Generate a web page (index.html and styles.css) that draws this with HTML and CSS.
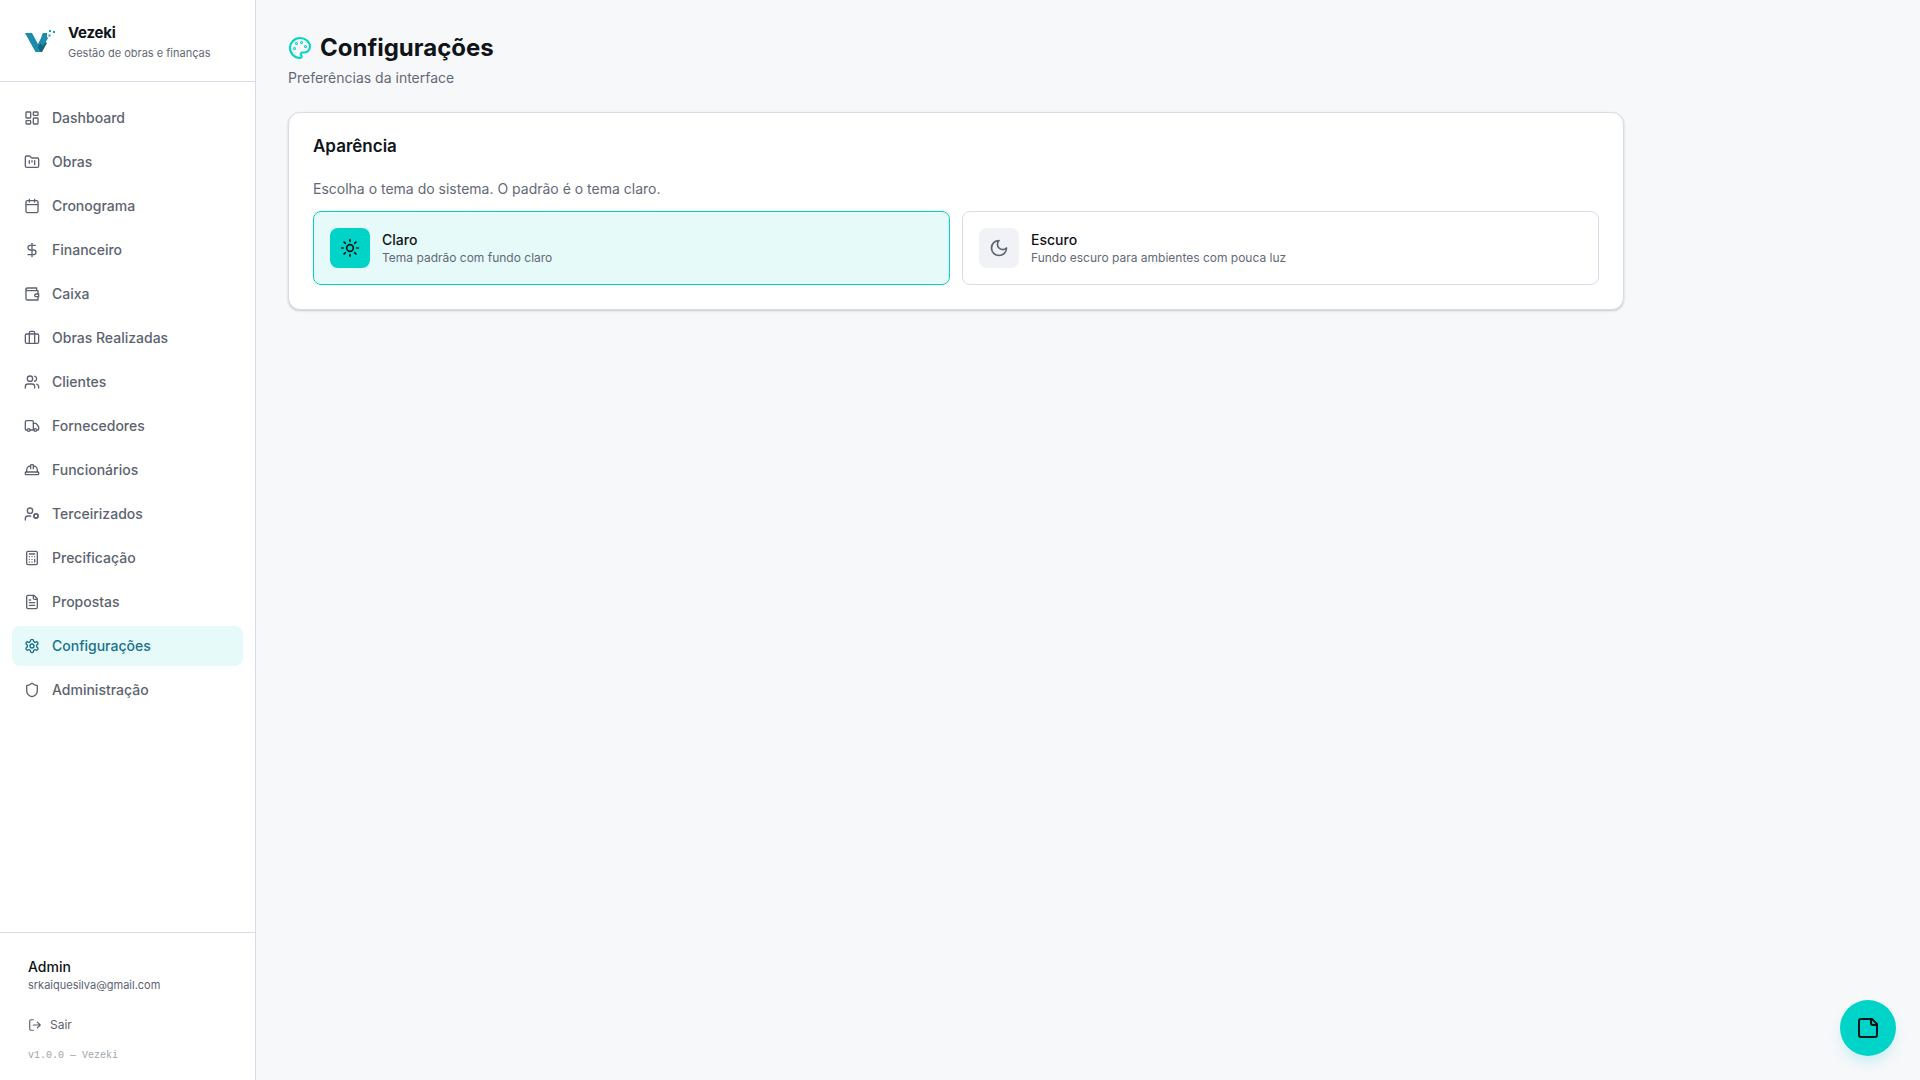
FILE: index.html
```html
<!DOCTYPE html>
<html lang="pt-BR">
<head>
  <meta charset="UTF-8" />
  <meta name="viewport" content="width=device-width, initial-scale=1.0"/>
  <title>Vezeki | Configurações</title>
  <link rel="stylesheet" href="styles.css">
</head>
<body>
  <aside class="sidebar">
    <div class="brand">
      <svg class="logo" viewBox="0 0 32 32">
        <path fill="#1b8cab" d="M1 8h7l6 11 5.500-11h3.500v3l-6.500 16h-5z"/>
        <path fill="#14647c" d="M18.500 15l4.500 3-5 9h-1.500l-2.500-5z"/>
        <path fill="#1b8cab" d="M18.500 8.500h4.500v4h1.500L19 21l-3-3z"/>
        <path fill="#1b9bb8" d="M25 5h2v2h-2zM29 6h2v2h-2zM24.500 9.500h2v2h-2z"/>
      </svg>
      <div>
        <h2>Vezeki</h2>
        <p>Gestão de obras e finanças</p>
      </div>
    </div>

    <nav class="menu">
      <a href="#"><svg class="icon" viewBox="0 0 24 24"><rect width="7" height="9" x="3" y="3" rx="1"/><rect width="7" height="5" x="14" y="3" rx="1"/><rect width="7" height="9" x="14" y="12" rx="1"/><rect width="7" height="5" x="3" y="16" rx="1"/></svg>Dashboard</a>
      <a href="#"><svg class="icon" viewBox="0 0 24 24"><path d="M4 20h16a2 2 0 0 0 2-2V8a2 2 0 0 0-2-2h-7.930a2 2 0 0 1-1.660-.9l-.82-1.200A2 2 0 0 0 7.930 3H4a2 2 0 0 0-2 2v13c0 1.100.9 2 2 2Z"/><path d="M8 10v4M12 10v2M16 10v6"/></svg>Obras</a>
      <a href="#"><svg class="icon" viewBox="0 0 24 24"><path d="M8 2v4M16 2v4"/><rect width="18" height="18" x="3" y="4" rx="2"/><path d="M3 10h18"/></svg>Cronograma</a>
      <a href="#"><svg class="icon" viewBox="0 0 24 24"><path d="M12 2v20"/><path d="M17 5H9.500a3.500 3.500 0 0 0 0 7h5a3.500 3.500 0 0 1 0 7H6"/></svg>Financeiro</a>
      <a href="#"><svg class="icon" viewBox="0 0 24 24"><path d="M21 12V7H5a2 2 0 0 1 0-4h14v4"/><path d="M3 5v14a2 2 0 0 0 2 2h16v-5"/><path d="M18 12a2 2 0 0 0 0 4h4v-4Z"/></svg>Caixa</a>
      <a href="#"><svg class="icon" viewBox="0 0 24 24"><path d="M16 20V4a2 2 0 0 0-2-2h-4a2 2 0 0 0-2 2v16"/><rect width="20" height="14" x="2" y="6" rx="2"/></svg>Obras Realizadas</a>
      <a href="#"><svg class="icon" viewBox="0 0 24 24"><path d="M16 21v-2a4 4 0 0 0-4-4H6a4 4 0 0 0-4 4v2"/><circle cx="9" cy="7" r="4"/><path d="M22 21v-2a4 4 0 0 0-3-3.870M16 3.130a4 4 0 0 1 0 7.750"/></svg>Clientes</a>
      <a href="#"><svg class="icon" viewBox="0 0 24 24"><path d="M14 18V6a2 2 0 0 0-2-2H4a2 2 0 0 0-2 2v11a1 1 0 0 0 1 1h2M15 18H9"/><path d="M19 18h2a1 1 0 0 0 1-1v-3.650a1 1 0 0 0-.22-.624l-3.480-4.350A1 1 0 0 0 17.520 8H14"/><circle cx="17" cy="18" r="2"/><circle cx="7" cy="18" r="2"/></svg>Fornecedores</a>
      <a href="#"><svg class="icon" viewBox="0 0 24 24"><path d="M2 18a1 1 0 0 0 1 1h18a1 1 0 0 0 1-1v-2a1 1 0 0 0-1-1H3a1 1 0 0 0-1 1v2z"/><path d="M10 10V5a1 1 0 0 1 1-1h2a1 1 0 0 1 1 1v5M4 15v-3a6 6 0 0 1 6-6M14 6a6 6 0 0 1 6 6v3"/></svg>Funcionários</a>
      <a href="#"><svg class="icon" viewBox="0 0 24 24"><circle cx="18" cy="15" r="3"/><circle cx="9" cy="7" r="4"/><path d="M10 15H6a4 4 0 0 0-4 4v2M21.700 16.400l-.9-.3M15.200 13.900l-.9-.3M16.600 18.700l.3-.9M19.100 12.200l.3-.9M19.600 18.700l-.4-1M16.800 12.300l-.4-1M14.300 16.600l1-.4M20.700 13.800l1-.4"/></svg>Terceirizados</a>
      <a href="#"><svg class="icon" viewBox="0 0 24 24"><rect width="16" height="20" x="4" y="2" rx="2"/><path d="M8 6h8M16 14v4M16 10h.01M12 10h.01M8 10h.01M12 14h.01M8 14h.01M12 18h.01M8 18h.01"/></svg>Precificação</a>
      <a href="#"><svg class="icon" viewBox="0 0 24 24"><path d="M15 2H6a2 2 0 0 0-2 2v16a2 2 0 0 0 2 2h12a2 2 0 0 0 2-2V7Z"/><path d="M14 2v4a2 2 0 0 0 2 2h4M10 9H8M16 13H8M16 17H8"/></svg>Propostas</a>
      <a href="#" class="active"><svg class="icon" viewBox="0 0 24 24"><path d="M12.220 2h-.44a2 2 0 0 0-2 2v.18a2 2 0 0 1-1 1.730l-.43.25a2 2 0 0 1-2 0l-.15-.08a2 2 0 0 0-2.730.73l-.22.38a2 2 0 0 0 .73 2.730l.15.1a2 2 0 0 1 1 1.720v.51a2 2 0 0 1-1 1.740l-.15.09a2 2 0 0 0-.73 2.730l.22.38a2 2 0 0 0 2.730.73l.15-.08a2 2 0 0 1 2 0l.43.25a2 2 0 0 1 1 1.730V20a2 2 0 0 0 2 2h.44a2 2 0 0 0 2-2v-.18a2 2 0 0 1 1-1.730l.43-.25a2 2 0 0 1 2 0l.15.08a2 2 0 0 0 2.730-.73l.22-.39a2 2 0 0 0-.73-2.730l-.15-.08a2 2 0 0 1-1-1.740v-.5a2 2 0 0 1 1-1.740l.15-.09a2 2 0 0 0 .73-2.730l-.22-.38a2 2 0 0 0-2.730-.73l-.15.08a2 2 0 0 1-2 0l-.43-.25a2 2 0 0 1-1-1.730V4a2 2 0 0 0-2-2z"/><circle cx="12" cy="12" r="3"/></svg>Configurações</a>
      <a href="#"><svg class="icon" viewBox="0 0 24 24"><path d="M20 13c0 5-3.500 7.500-7.660 8.950a1 1 0 0 1-.67-.01C7.500 20.500 4 18 4 13V6a1 1 0 0 1 1-1c2 0 4.500-1.200 6.240-2.720a1.170 1.170 0 0 1 1.520 0C14.510 3.810 17 5 19 5a1 1 0 0 1 1 1z"/></svg>Administração</a>
    </nav>

    <div class="account">
      <p class="user">Admin</p>
      <p class="email">srkaiquesilva@gmail.com</p>
      <button class="logout"><svg class="icon" viewBox="0 0 24 24"><path d="M9 21H5a2 2 0 0 1-2-2V5a2 2 0 0 1 2-2h4M16 17l5-5-5-5M21 12H9"/></svg>Sair</button>
      <p class="version">v1.0.0 — Vezeki</p>
    </div>
  </aside>

  <main>
    <h1><svg class="icon" viewBox="0 0 24 24"><circle cx="13.500" cy="6.500" r=".5"/><circle cx="17.500" cy="10.500" r=".5"/><circle cx="8.500" cy="7.500" r=".5"/><circle cx="6.500" cy="12.500" r=".5"/><path d="M12 2C6.500 2 2 6.500 2 12s4.500 10 10 10c.926 0 1.648-.746 1.648-1.688 0-.437-.18-.835-.437-1.125-.29-.289-.438-.652-.438-1.125a1.640 1.640 0 0 1 1.668-1.668h1.996c3.051 0 5.555-2.503 5.555-5.554C21.965 6.012 17.461 2 12 2z"/></svg><span>Configurações</span></h1>
    <p class="subtitle">Preferências da interface</p>

    <section class="card">
      <h3>Aparência</h3>
      <p>Escolha o tema do sistema. O padrão é o tema claro.</p>
      <div class="themes">
        <button class="theme selected">
          <span class="theme-icon"><svg class="icon" viewBox="0 0 24 24"><circle cx="12" cy="12" r="4"/><path d="M12 2v2M12 20v2M4.930 4.930l1.410 1.410M17.660 17.660l1.410 1.410M2 12h2M20 12h2M6.340 17.660l-1.410 1.410M19.070 4.930l-1.410 1.410"/></svg></span>
          <span class="theme-text"><strong>Claro</strong><small>Tema padrão com fundo claro</small></span>
        </button>
        <button class="theme">
          <span class="theme-icon"><svg class="icon" viewBox="0 0 24 24"><path d="M12 3a6 6 0 0 0 9 9 9 9 0 1 1-9-9Z"/></svg></span>
          <span class="theme-text"><strong>Escuro</strong><small>Fundo escuro para ambientes com pouca luz</small></span>
        </button>
      </div>
    </section>
  </main>

  <button class="fab" aria-label="Notas"><svg class="icon" viewBox="0 0 24 24"><path d="M16 3H5a2 2 0 0 0-2 2v14a2 2 0 0 0 2 2h14a2 2 0 0 0 2-2V8Z"/><path d="M15 3v4a2 2 0 0 0 2 2h4"/></svg></button>
</body>
</html>
```

FILE: styles.css
```css
* {
  box-sizing: border-box;
}
body {
  margin: 0;
  display: flex;
  height: 100vh;
  font-family: Inter, "Liberation Sans", sans-serif;
  font-size: 14px;
  line-height: 20px;
  background: #f7f8fa;
  color: #0f1419;
}
h1, h2, h3, p {
  margin: 0;
}
button {
  font: inherit;
  color: inherit;
  cursor: pointer;
}
.icon {
  width: 16px;
  height: 16px;
  flex-shrink: 0;
  fill: none;
  stroke: currentColor;
  stroke-width: 2;
  stroke-linecap: round;
  stroke-linejoin: round;
}

/* Sidebar */
.sidebar {
  width: 256px;
  flex-shrink: 0;
  display: flex;
  flex-direction: column;
  background: #fff;
  border-right: 1px solid #d9dce6;
}
.brand {
  display: flex;
  align-items: center;
  gap: 12px;
  height: 82px;
  padding: 0 24px;
  border-bottom: 1px solid #d9dce6;
}
.logo {
  width: 32px;
  height: 32px;
}
.brand h2 {
  font-size: 15px;
  line-height: 24px;
  font-weight: 700;
  letter-spacing: -0.2px;
}
.brand p {
  font-size: 11px;
  line-height: 16px;
  color: #636977;
}
.menu {
  flex: 1;
  display: flex;
  flex-direction: column;
  gap: 4px;
  padding: 16px 12px;
}
.menu a {
  display: flex;
  align-items: center;
  gap: 12px;
  height: 40px;
  padding: 0 12px;
  border-radius: 8px;
  color: #5c6370;
  font-weight: 500;
  text-decoration: none;
}
.menu a.active {
  background: #e6faf9;
  color: #196f8c;
}
.account {
  height: 148px;
  padding: 24px 28px 0;
  border-top: 1px solid #d9dce6;
}
.user {
  font-weight: 500;
}
.email {
  font-size: 11px;
  line-height: 16px;
  color: #5c6370;
}
.logout {
  display: flex;
  align-items: center;
  gap: 8px;
  margin: 24px 0 15px;
  padding: 0;
  border: 0;
  background: none;
  font-size: 12px;
  line-height: 16px;
  color: #5c6370;
}
.logout .icon {
  width: 14px;
  height: 14px;
}
.version {
  font-family: "Liberation Mono", monospace;
  font-size: 10px;
  line-height: 15px;
  color: #9da5a9;
}

/* Content */
main {
  flex: 1;
  max-width: 1400px;
  padding: 32px;
}
h1 {
  display: flex;
  align-items: center;
  gap: 8px;
  font-size: 24px;
  line-height: 32px;
  font-weight: 700;
}
h1 .icon {
  width: 24px;
  height: 24px;
  color: #00d4c8;
}
.subtitle {
  margin-top: 4px;
  color: #636977;
}
.card {
  margin-top: 24px;
  padding: 24px;
  background: #fff;
  border: 1px solid #d9dce6;
  border-radius: 12px;
  box-shadow: 0 1px 3px rgba(0,0,0,0.1), 0 1px 2px rgba(0,0,0,0.1);
}
.card h3 {
  margin-bottom: 24px;
  font-size: 17px;
  line-height: 18px;
  font-weight: 600;
}
.card > p {
  color: #636977;
}
.themes {
  display: grid;
  grid-template-columns: 1fr 1fr;
  gap: 12px;
  margin-top: 12px;
}
.theme {
  display: flex;
  align-items: center;
  gap: 12px;
  height: 74px;
  padding: 0 16px;
  border: 1px solid #d9dce6;
  border-radius: 8px;
  background: #fff;
  text-align: left;
}
.theme.selected {
  border-color: #00d4c8;
  background: #e6faf9;
}
.theme-icon {
  display: flex;
  align-items: center;
  justify-content: center;
  width: 40px;
  height: 40px;
  border-radius: 8px;
  background: #f0f2f5;
  color: #5c6370;
}
.theme-icon .icon {
  width: 20px;
  height: 20px;
}
.selected .theme-icon {
  background: #00d4c8;
  color: #0f1419;
}
.theme-text strong {
  display: block;
  font-weight: 500;
}
.theme-text small {
  display: block;
  font-size: 12px;
  line-height: 16px;
  color: #636977;
}

/* Floating notes button */
.fab {
  position: fixed;
  right: 24px;
  bottom: 24px;
  display: flex;
  align-items: center;
  justify-content: center;
  width: 56px;
  height: 56px;
  padding: 0;
  border: 0;
  border-radius: 50%;
  background: #00d4c8;
  color: #0f1419;
  box-shadow: 0 8px 16px -4px rgba(0,200,220,0.25);
}
.fab .icon {
  width: 24px;
  height: 24px;
}
```
